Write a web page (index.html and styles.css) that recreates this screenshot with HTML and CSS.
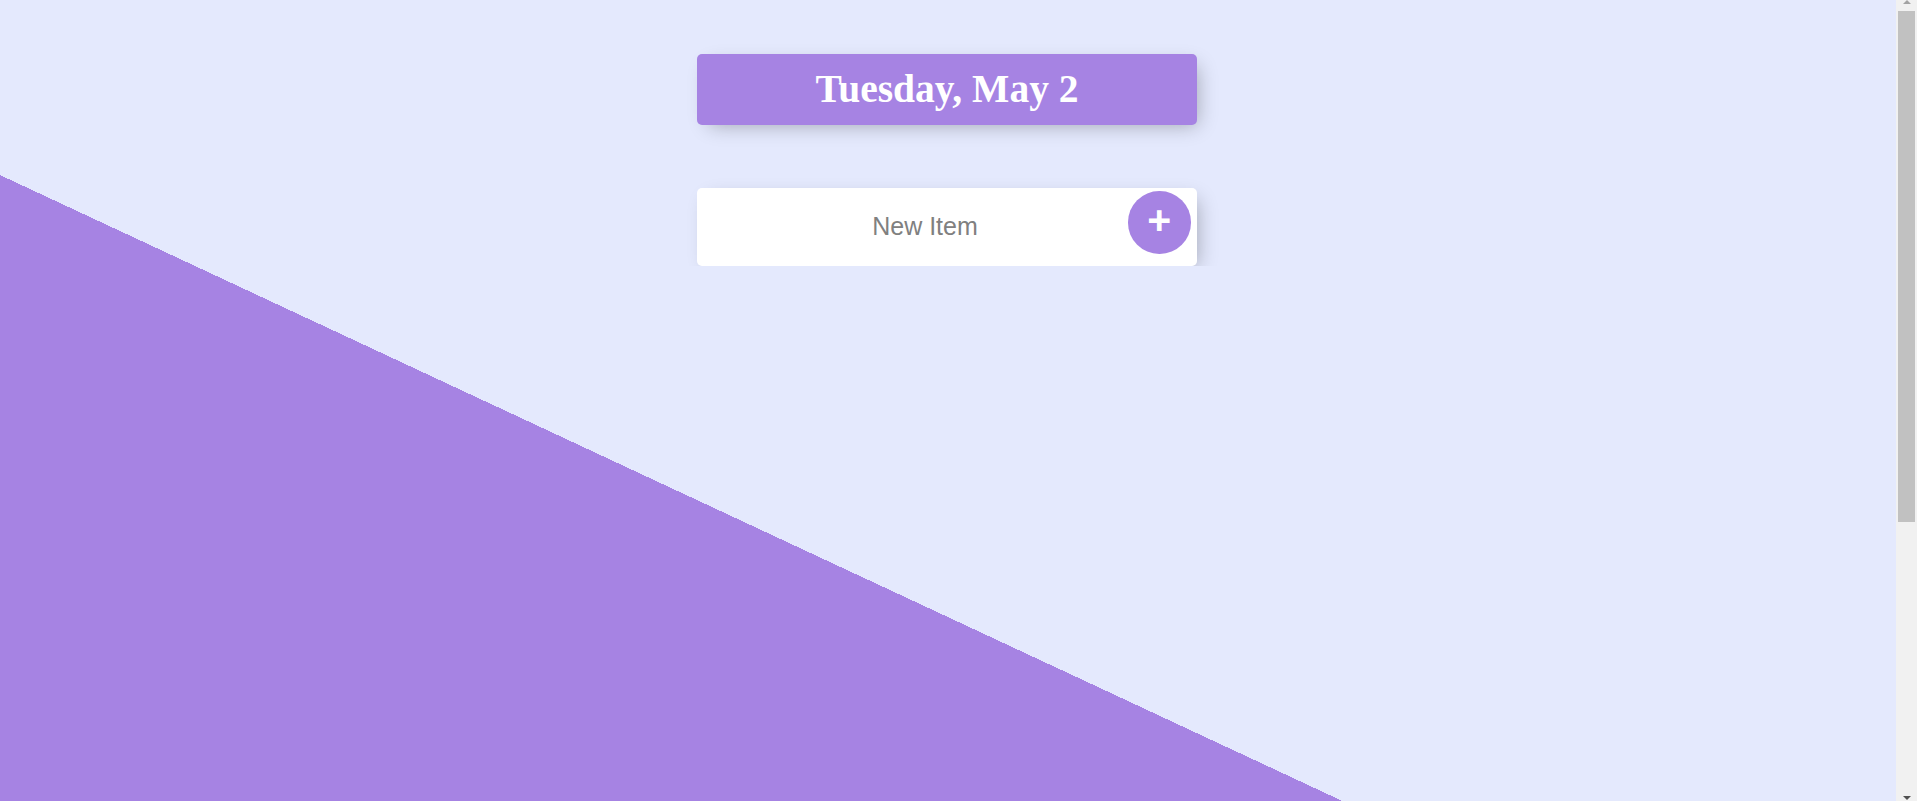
FILE: index.html
```html
<!DOCTYPE html>
<html lang="en">
<head>
<meta charset="utf-8">
<title>To-Do List</title>
<link rel="stylesheet" href="styles.css">
</head>
<body>
  <main class="page">
    <div class="box heading">
      <h1 class="heading-title">Tuesday, May 2</h1>
    </div>
    <form class="box new-item">
      <input class="new-item-input" type="text" name="newItem" placeholder="New Item" autocomplete="off">
      <button class="add-button" type="submit" name="button">+</button>
    </form>
  </main>
  <div class="scrollbar" aria-hidden="true">
    <span class="scroll-arrow scroll-arrow-up"></span>
    <span class="scroll-thumb"></span>
    <span class="scroll-arrow scroll-arrow-down"></span>
  </div>
</body>
</html>
```

FILE: styles.css
```css
html {
  min-height: 1244px;
  background-color: #E4E9FD;
  background-image: linear-gradient(25deg, #A683E3 50%, #E4E9FD 50%);
}

body {
  margin: 0;
  font-family: "Liberation Sans", Arial, sans-serif;
}

.page {
  width: calc(100% - 23px);
  padding-top: 54px;
  display: flex;
  flex-direction: column;
  align-items: center;
  gap: 63px;
}

.box {
  width: 500px;
  box-sizing: border-box;
  border-radius: 5px;
  box-shadow: 6px 6px 19px -6px rgba(0, 0, 0, 0.3);
}

.heading {
  height: 71px;
  background-color: #A683E3;
  display: flex;
  align-items: center;
  justify-content: center;
  padding-bottom: 2px;
}

.heading-title {
  margin: 0;
  color: #fff;
  font-family: "Liberation Serif", "Times New Roman", serif;
  font-weight: bold;
  font-size: 39.5px;
}

.new-item {
  height: 77.5px;
  margin: 0;
  background: #fff;
  display: flex;
  align-items: flex-start;
  padding-left: 32.5px;
  gap: 7.5px;
}

.new-item-input {
  width: 391px;
  height: 77px;
  box-sizing: border-box;
  border: none;
  background: transparent;
  text-align: center;
  font-family: "Liberation Sans", Arial, sans-serif;
  font-size: 25px;
  padding: 0 2px;
  outline: none;
}

.new-item-input::placeholder {
  color: grey;
  opacity: 1;
}

.add-button {
  width: 62.5px;
  height: 62.5px;
  margin-top: 3px;
  border: 0;
  border-radius: 50%;
  background-color: #A683E3;
  color: #fff;
  font-family: "Liberation Sans", Arial, sans-serif;
  font-weight: bold;
  font-size: 41px;
  display: flex;
  align-items: center;
  justify-content: center;
  padding: 0 0 4px;
}

.scrollbar {
  position: fixed;
  top: 0;
  right: 0;
  width: 21px;
  height: 100vh;
  background: #f1f1f1;
  display: flex;
  flex-direction: column;
  align-items: center;
}

.scroll-arrow {
  width: 0;
  height: 0;
  border-left: 4.5px solid transparent;
  border-right: 4.5px solid transparent;
}

.scroll-arrow-up {
  margin-top: 0;
  border-bottom: 4px solid #a3a3a3;
}

.scroll-thumb {
  width: 17px;
  height: 511px;
  margin-top: 7px;
  background: #c1c1c1;
}

.scroll-arrow-down {
  margin-top: auto;
  margin-bottom: 1px;
  border-top: 4px solid #505050;
}
```
